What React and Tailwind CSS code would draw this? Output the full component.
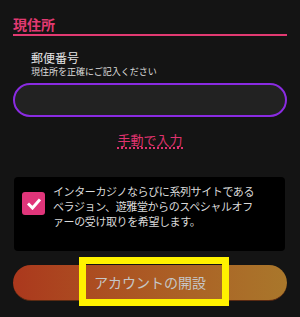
import React from 'react';

export default function App() {
  return (
    <div
      className="min-h-screen bg-[#141414] px-[13px] pt-[15px]"
      style={{ fontFamily: '"Noto Sans CJK JP", "Noto Sans", sans-serif' }}
    >
      <h2 className="text-[14px] leading-[19px] font-bold text-[#e23a72] border-b-2 border-[#e23a72]">
        現住所
      </h2>

      <div className="ml-[18px] mt-[14px]">
        <p className="text-[12px] leading-[16px] text-[#e6e6e6]">郵便番号</p>
        <p className="text-[9px] leading-[12px] text-[#dcdcdc]">現住所を正確にご記入ください</p>
      </div>

      <div className="mt-[5px] h-[34px] rounded-full border-2 border-[#8a2be2] bg-[#222222]"></div>

      <div className="mt-[16px] flex justify-center">
        <span className="inline-block text-[13px] leading-[14px] text-[#e0336f] border-b-2 border-dotted border-[#e0336f]">
          手動で入力
        </span>
      </div>

      <div className="mt-[28px] ml-[1px] mr-[2px] h-[74px] rounded-[4px] bg-black flex items-start pl-[8px] pt-[7px]">
        <div className="mt-[8px] w-[23px] h-[23px] shrink-0 rounded-[3px] bg-[#e0357a] flex items-center justify-center">
          <svg width="14" height="12" viewBox="0 0 14 12">
            <polyline points="2,6.5 5.5,10 12,2.5" fill="none" stroke="white" strokeWidth="3" strokeLinecap="square" />
          </svg>
        </div>
        <p className="ml-[8px] text-[11px] leading-[15px] tracking-[-0.4px] text-[#dadada] whitespace-nowrap">
          インターカジノならびに系列サイトである
          <br />
          ベラジョン、遊雅堂からのスペシャルオフ
          <br />
          ァーの受け取りを希望します。
        </p>
      </div>

      <div className="relative mt-[14px] h-[36px] rounded-full bg-gradient-to-r from-[#ab381d] to-[#a9772b] border-b border-[#5a2a12] flex items-center justify-center">
        <span className="text-[14px] text-[#c6c6c6]">アカウントの開設</span>
        <div className="absolute left-[66px] top-[-8px] w-[150px] h-[49px] border-[7px] border-[#fff200]"></div>
      </div>
    </div>
  );
}
